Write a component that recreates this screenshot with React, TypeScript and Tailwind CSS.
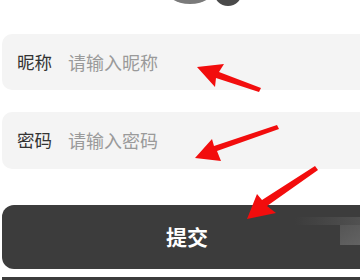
export default function App() {
  return (
    <div
      className="relative h-[280px] w-[360px] overflow-hidden bg-white"
      style={{ fontFamily: '"Noto Sans CJK SC", "Noto Sans", sans-serif' }}
    >
      <div className="w-[372px] pl-[2px]">
        {/* avatar peeking at the top */}
        <svg width="360" height="34" viewBox="0 0 360 34" className="block">
          <ellipse cx="188" cy="-14" rx="26" ry="18" fill="#7a7a7a" />
          <circle cx="226" cy="-8" r="14" fill="#4a4a4a" />
        </svg>

        <div className="flex h-[56px] items-center rounded-[10px] bg-[#f4f4f4] pl-[15px] text-[18px]">
          <span className="w-[51px] text-[17.5px] text-[#333333]">昵称</span>
          <span className="text-[#9a9a9a]">请输入昵称</span>
        </div>

        <div className="mt-[22px] flex h-[57px] items-center rounded-[10px] bg-[#f4f4f4] pl-[15px] text-[18px]">
          <span className="w-[51px] text-[17.5px] text-[#333333]">密码</span>
          <span className="text-[#9a9a9a]">请输入密码</span>
        </div>

        <button
          type="button"
          className="relative mt-[36px] flex h-[64px] w-full items-center justify-center overflow-hidden rounded-[12px] bg-[#3c3c3c] text-[21px] font-bold text-white"
        >
          <span className="relative z-10">提交</span>
          <span className="absolute right-0 top-[12px] h-[8px] w-[77px] bg-gradient-to-r from-[#3c3c3c] to-[#555555]" />
          <span className="absolute right-0 top-[20px] h-[20px] w-[32px] bg-gradient-to-br from-[#555555] to-[#666666]" />
        </button>

        <div className="mt-[8px] h-[10px] bg-[#3c3c3c]" />
      </div>

      {/* red annotation arrows */}
      <svg className="pointer-events-none absolute left-0 top-0" width="360" height="280" viewBox="0 0 360 280">
        <polygon points="197,67 224,64 219,72 261,88 259,92 216,78 215,87" fill="#f20d0d" />
        <polygon points="195,158 212,139 214,146 277,125 279,129 217,151 221,161" fill="#f20d0d" />
        <polygon points="247,219 257,194 262,200 315,166 318,170 267,206 276,213" fill="#f20d0d" />
      </svg>
    </div>
  );
}
